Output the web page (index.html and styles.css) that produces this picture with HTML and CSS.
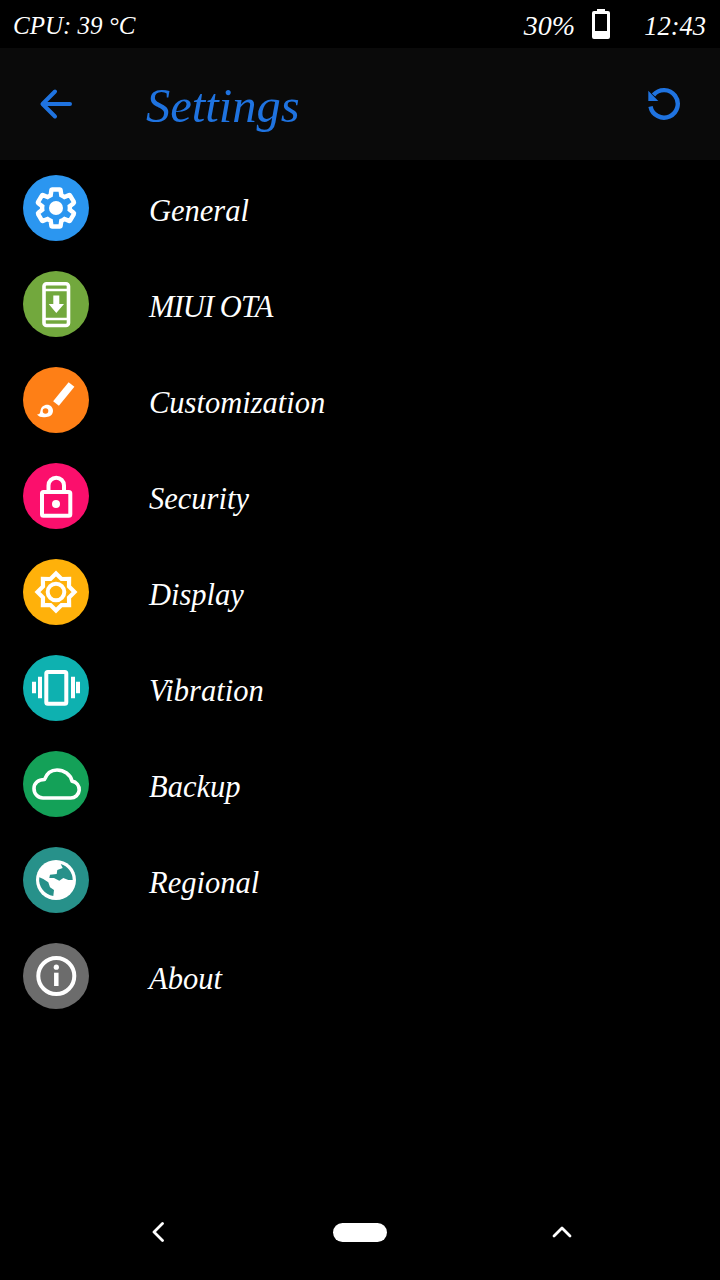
FILE: index.html
```html
<!DOCTYPE html>
<html lang="en">
<head>
<meta charset="utf-8">
<title>Settings</title>
<link rel="stylesheet" href="styles.css">
</head>
<body>
<div class="screen">
  <header class="status">
    <span class="status-cpu">CPU: 39 °C</span>
    <div class="status-right">
      <span class="status-pct">30%</span>
      <svg class="status-batt" viewBox="0 0 18 30" width="18" height="30"><path d="M5 0h8v2h3a2 2 0 0 1 2 2v24a2 2 0 0 1-2 2H2a2 2 0 0 1-2-2V4a2 2 0 0 1 2-2h3z" fill="#fff"/><rect x="3" y="5" width="12" height="17" fill="#000"/></svg>
      <span class="status-time">12:43</span>
    </div>
  </header>
  <div class="toolbar">
    <svg class="tb-back" viewBox="0 0 34 32" width="34" height="32"><path d="M31 16H4M16 3.500 3.500 16 16 28.500" fill="none" stroke="#1f73e0" stroke-width="4" stroke-linecap="round" stroke-linejoin="round"/></svg>
    <h1 class="tb-title">Settings</h1>
    <svg class="tb-reset" viewBox="0 0 34 34" width="34" height="34"><path d="M6.500 8A13.750 13.750 0 1 1 3.500 19.500" fill="none" stroke="#1f73e0" stroke-width="4.400"/><path d="M1.300 3.700V14h10z" fill="#1f73e0"/></svg>
  </div>
  <main class="list">
    <div class="row"><div class="ico c-blue"><svg viewBox="0 0 66 66" width="66" height="66"><g transform="translate(10.800 10.800) scale(1.850)"><path d="M19.430 12.980c.04-.32.07-.64.07-.98s-.03-.66-.07-.98l2.110-1.650c.19-.15.24-.42.12-.64l-2-3.460c-.12-.22-.39-.3-.61-.22l-2.490 1c-.52-.4-1.080-.73-1.690-.98l-.38-2.650C14.460 2.180 14.250 2 14 2h-4c-.25 0-.46.18-.49.42l-.38 2.650c-.61.25-1.170.59-1.690.98l-2.490-1c-.23-.09-.49 0-.61.22l-2 3.460c-.13.22-.07.49.12.64l2.110 1.650c-.04.32-.07.65-.07.98s.03.66.07.98l-2.110 1.650c-.19.15-.24.42-.12.64l2 3.460c.12.22.39.3.61.22l2.490-1c.52.4 1.080.73 1.690.98l.38 2.650c.03.24.24.42.49.42h4c.25 0 .46-.18.49-.42l.38-2.650c.61-.25 1.170-.59 1.690-.98l2.490 1c.23.09.49 0 .61-.22l2-3.460c.12-.22.07-.49-.12-.64l-2.110-1.650z" fill="none" stroke="#fff" stroke-width="2.400"/></g><circle cx="33" cy="33" r="7" fill="#fff"/></svg></div><span class="label">General</span></div>
    <div class="row"><div class="ico c-green"><svg viewBox="0 0 66 66" width="66" height="66"><rect x="21" y="12.800" width="24.500" height="41.700" rx="2.500" fill="none" stroke="#fff" stroke-width="3.600"/><path d="M21 19h24.500M21 48h24.500" stroke="#fff" stroke-width="2.400"/><path d="M30.300 24.500h6V33H41L33.300 42 25.700 33h4.600z" fill="#fff"/></svg></div><span class="label label-tight">MIUI OTA</span></div>
    <div class="row"><div class="ico c-orange"><svg viewBox="0 0 66 66" width="66" height="66"><path d="M48.500 17.500 33 36.500" stroke="#fff" stroke-width="7.500" stroke-linejoin="round"/><path d="M14 47.500c2.500 0 3-1 3.500-4 .6-3.500 3.500-5.700 6.500-5.700 3.500 0 6 2.700 6 6 0 3.800-3 6.200-6.500 6.200-3.500.5-7 .5-9.500-2.500z" fill="#fff"/><circle cx="22.500" cy="44" r="2.800" fill="#fe7f16"/></svg></div><span class="label">Customization</span></div>
    <div class="row"><div class="ico c-pink"><svg viewBox="0 0 66 66" width="66" height="66"><rect x="19" y="29" width="28.300" height="23.700" rx="1.500" fill="none" stroke="#fff" stroke-width="4"/><path d="M25.500 29v-6.500a7.750 7.750 0 0 1 15.500 0V29" fill="none" stroke="#fff" stroke-width="4"/><circle cx="33" cy="41" r="4" fill="#fff"/></svg></div><span class="label">Security</span></div>
    <div class="row"><div class="ico c-amber"><svg viewBox="0 0 66 66" width="66" height="66"><path d="M33 14.500 38.500 20 46.100 19.900 46 27.500 51.500 33 46 38.500 46.100 46.100 38.500 46 33 51.500 27.500 46 19.900 46.100 20 38.500 14.500 33 20 27.500 19.900 19.900 27.500 20z" fill="none" stroke="#fff" stroke-width="4.200"/><circle cx="33" cy="33" r="8.300" fill="none" stroke="#fff" stroke-width="4"/></svg></div><span class="label">Display</span></div>
    <div class="row"><div class="ico c-teal"><svg viewBox="0 0 66 66" width="66" height="66"><rect x="23.300" y="17" width="20" height="31.700" rx="1.500" fill="none" stroke="#fff" stroke-width="4"/><path d="M17 21.700v21.600M11 26.700v11.600M50 21.700v21.600M55 26.700v11.600" stroke="#fff" stroke-width="4"/></svg></div><span class="label">Vibration</span></div>
    <div class="row"><div class="ico c-emerald"><svg viewBox="0 0 66 66" width="66" height="66"><path d="M20 47H47.500a8.500 8.500 0 0 0 1.500-16.900C47.500 23.500 41 19 34 19 28 19 23.500 23 21.500 28.500 15.500 28.500 11 32 11 37.500 11 43 15 47 20 47z" fill="none" stroke="#fff" stroke-width="3.600" stroke-linejoin="round"/></svg></div><span class="label">Backup</span></div>
    <div class="row"><div class="ico c-sea"><svg viewBox="0 0 66 66" width="66" height="66"><circle cx="33" cy="33" r="20" fill="#fff"/><path d="M37.700 17 39.700 21 34.300 23 33.700 27 27 27.700 26.300 31H31L36.300 33.700 40.300 31 45.300 33H49.700A16.700 16.700 0 0 0 37.700 17z" fill="#27918a"/><path d="M16.300 30.300A16.700 16.700 0 0 0 30.300 49L31 43 27 40.300 25.300 35.300 20.300 32z" fill="#27918a"/></svg></div><span class="label">Regional</span></div>
    <div class="row"><div class="ico c-grey"><svg viewBox="0 0 66 66" width="66" height="66"><circle cx="33.300" cy="33" r="18" fill="none" stroke="#fff" stroke-width="4"/><path d="M33.300 29.700V43" stroke="#fff" stroke-width="4.500"/><circle cx="33.300" cy="24.200" r="2.600" fill="#fff"/></svg></div><span class="label">About</span></div>
  </main>
  <nav class="navbar">
    <svg class="nav-back" viewBox="0 0 12 20" width="12" height="20"><path d="M10.500 1.500 2 10l8.500 8.500" fill="none" stroke="#fff" stroke-width="2.800" stroke-linecap="round" stroke-linejoin="round"/></svg>
    <div class="nav-home"></div>
    <svg class="nav-up" viewBox="0 0 20 12" width="20" height="12"><path d="M2 10l8-8 8 8" fill="none" stroke="#fff" stroke-width="2.800" stroke-linecap="round" stroke-linejoin="round"/></svg>
  </nav>
</div>
</body>
</html>
```
FILE: styles.css
```css
* { box-sizing: border-box; }
html, body { margin: 0; padding: 0; background: #000; }
.screen {
  width: 720px;
  height: 1280px;
  display: flex;
  flex-direction: column;
  background: #000;
  color: #fff;
  font-family: "Liberation Serif", serif;
  font-style: italic;
  overflow: hidden;
}
.status {
  height: 48px;
  flex: none;
  display: flex;
  align-items: center;
  justify-content: space-between;
  padding: 0 14px 0 13px;
  background: #000;
}
.status-cpu { font-size: 25px; padding-top: 4px; }
.status-right { display: flex; align-items: center; }
.status-pct { font-size: 28px; padding-top: 4px; }
.status-batt { margin-left: 17px; }
.status-time { margin-left: 34px; font-size: 26.500px; padding-top: 4px; }
.toolbar {
  height: 112px;
  flex: none;
  display: flex;
  align-items: center;
  background: #0a0a0a;
  padding: 0 39px;
}
.tb-back { flex: none; }
.tb-title {
  margin: 0 0 0 73px;
  padding-top: 2px;
  font-size: 48.500px;
  font-weight: 400;
  color: #1f73e0;
  flex: 1;
}
.tb-reset { flex: none; }
.list { flex: 1; display: flex; flex-direction: column; }
.row {
  height: 96px;
  flex: none;
  display: flex;
  align-items: center;
  padding-left: 23px;
}
.ico { width: 66px; height: 66px; border-radius: 50%; flex: none; }
.ico svg { display: block; }
.label { margin-left: 60px; padding-top: 6px; font-size: 30.500px; }
.label-tight { letter-spacing: -0.900px; }
.c-blue { background: #2b96f0; }
.c-green { background: #72a83d; }
.c-orange { background: #fe7f16; }
.c-pink { background: #fb0f6c; }
.c-amber { background: #ffb10a; }
.c-teal { background: #0eb1b0; }
.c-emerald { background: #14a158; }
.c-sea { background: #27918a; }
.c-grey { background: #6c6c6c; }
.navbar {
  height: 96px;
  flex: none;
  display: flex;
  align-items: center;
  justify-content: space-between;
  padding: 0 148px 0 152px;
}
.nav-home { width: 54px; height: 19px; margin-left: 4px; border-radius: 10px; background: #fff; }
```
